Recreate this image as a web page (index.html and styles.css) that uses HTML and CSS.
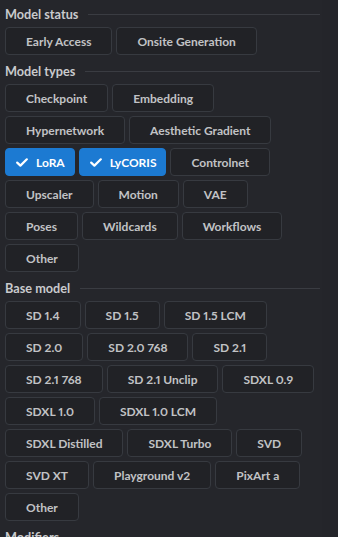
FILE: index.html
```html
<!DOCTYPE html>
<html lang="en">
<head>
    <meta charset="UTF-8">
    <meta name="viewport" content="width=device-width, initial-scale=1.0">
    <title>Filters</title>
    <link rel="stylesheet" href="styles.css">
</head>
<body>
    <div class="panel">
        <div class="filters">
            <div class="label">Model status</div>
            <div class="chips">
                <button class="chip">Early Access</button>
                <button class="chip">Onsite Generation</button>
            </div>

            <div class="label">Model types</div>
            <div class="chips">
                <button class="chip">Checkpoint</button>
                <button class="chip">Embedding</button>
                <button class="chip">Hypernetwork</button>
                <button class="chip">Aesthetic Gradient</button>
                <button class="chip checked"><svg viewBox="0 0 12 9"><path d="M1.2 4.6 4.4 7.6 10.8 1.3"/></svg>LoRA</button>
                <button class="chip checked"><svg viewBox="0 0 12 9"><path d="M1.2 4.6 4.4 7.6 10.8 1.3"/></svg>LyCORIS</button>
                <button class="chip">Controlnet</button>
                <button class="chip">Upscaler</button>
                <button class="chip">Motion</button>
                <button class="chip">VAE</button>
                <button class="chip">Poses</button>
                <button class="chip">Wildcards</button>
                <button class="chip">Workflows</button>
                <button class="chip">Other</button>
            </div>

            <div class="label">Base model</div>
            <div class="chips">
                <button class="chip">SD 1.4</button>
                <button class="chip">SD 1.5</button>
                <button class="chip">SD 1.5 LCM</button>
                <button class="chip">SD 2.0</button>
                <button class="chip">SD 2.0 768</button>
                <button class="chip">SD 2.1</button>
                <button class="chip">SD 2.1 768</button>
                <button class="chip">SD 2.1 Unclip</button>
                <button class="chip">SDXL 0.9</button>
                <button class="chip">SDXL 1.0</button>
                <button class="chip">SDXL 1.0 LCM</button>
                <button class="chip">SDXL Distilled</button>
                <button class="chip">SDXL Turbo</button>
                <button class="chip">SVD</button>
                <button class="chip">SVD XT</button>
                <button class="chip">Playground v2</button>
                <button class="chip">PixArt a</button>
                <button class="chip">Other</button>
            </div>

            <div class="label">Modifiers</div>
        </div>
        <div class="scrollbar"></div>
    </div>
</body>
</html>
```

FILE: styles.css
```css
body {
    margin: 0;
    background-color: #25262b;
    font-family: 'Lato', 'Open Sans', sans-serif;
    font-variant-numeric: proportional-nums;
    color: #c1c2c5;
    height: 537px;
    overflow: hidden;
}
.panel {
    display: flex;
    height: 100%;
}
.filters {
    flex: 1;
    padding: 4px 2px 0 5px;
}
.scrollbar {
    width: 16px;
    background-color: #24252a;
}
.label {
    display: flex;
    align-items: center;
    gap: 10px;
    height: 20px;
    font-size: 12.7px;
    font-weight: 700;
    color: #c9cacd;
    margin-bottom: 3px;
}
.label::after {
    content: '';
    flex: 1;
    height: 1px;
    background-color: #3a3c42;
}
.chips {
    display: flex;
    flex-wrap: wrap;
    gap: 4px;
    margin-bottom: 6px;
}
.chip {
    display: flex;
    align-items: center;
    height: 28px;
    padding: 0 20px;
    box-sizing: border-box;
    background-color: #212226;
    border: 1px solid #373a40;
    border-radius: 4px;
    color: #c1c2c5;
    font-family: inherit;
    font-variant-numeric: inherit;
    font-size: 12px;
    font-weight: 700;
    white-space: nowrap;
    cursor: pointer;
}
.chip.checked {
    background-color: #1c7ad2;
    border-color: #1c7ad2;
    color: #ffffff;
    padding: 0 9px 0 10px;
}
.chip svg {
    width: 12px;
    height: 9px;
    margin-right: 8px;
    fill: none;
    stroke: #ffffff;
    stroke-width: 2.2;
    stroke-linecap: round;
    stroke-linejoin: round;
}
```
